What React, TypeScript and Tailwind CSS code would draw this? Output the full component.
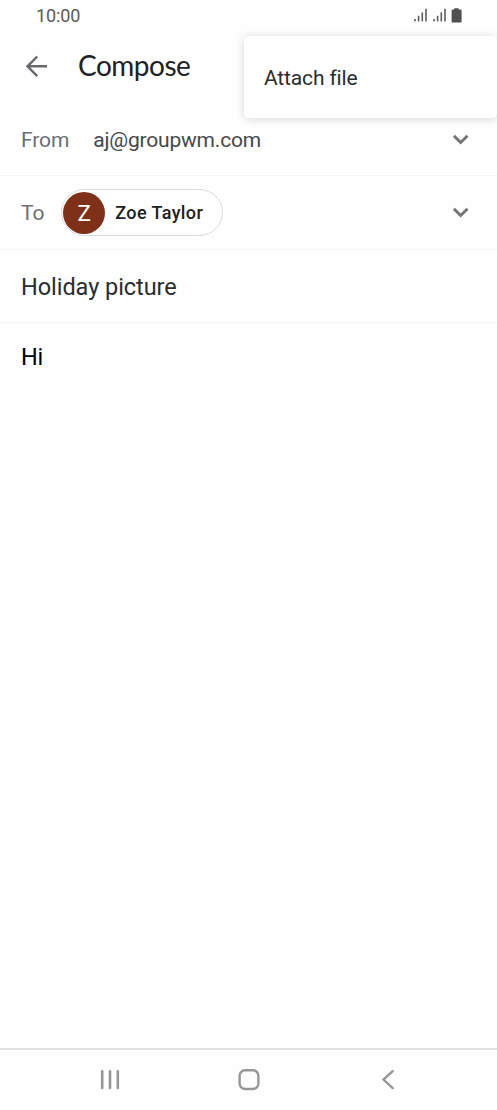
import type { ReactNode } from "react";

function SignalIcon() {
  return (
    <svg width="13" height="14" viewBox="0 0 13 14" fill="#5c5c5c">
      <rect x="0.2" y="11" width="1.6" height="2.4" />
      <rect x="3.8" y="7.8" width="1.6" height="5.6" />
      <rect x="7.5" y="4.4" width="1.6" height="9" />
      <rect x="11.2" y="0.8" width="1.6" height="12.6" />
    </svg>
  );
}

function BatteryIcon() {
  return (
    <svg width="11" height="15" viewBox="0 0 11 15" fill="#505050">
      <path d="M3.2 0.2h4.4v1.3h2a1 1 0 0 1 1 1v11a1 1 0 0 1-1 1H1.6a1 1 0 0 1-1-1v-11a1 1 0 0 1 1-1h1.6z" />
    </svg>
  );
}

function StatusBar() {
  return (
    <div className="flex h-8 items-center justify-between pr-[35px] pl-9 text-[#5a5a5a]">
      <span className="text-[18px] leading-8 tracking-[-0.1px]">10:00</span>
      <div className="-mt-0.5 flex items-center">
        <SignalIcon />
        <span className="w-1.5" />
        <SignalIcon />
        <span className="w-[5px]" />
        <BatteryIcon />
      </div>
    </div>
  );
}

function Header() {
  return (
    <header className="flex h-[71px] items-center pl-[26px]">
      <svg width="22" height="22" viewBox="0 0 22 22" fill="none" stroke="#68696c" strokeWidth="2.4" className="-mt-[3px]">
        <path d="M21 11.3H2M11.2 1.5L1.5 11.3L11.2 21.1" />
      </svg>
      <h1 className="-mt-[5px] ml-[30px] font-[Lato] text-[28px] leading-8 tracking-[-0.5px] text-[#202124]">
        Compose
      </h1>
    </header>
  );
}

function Chevron() {
  return (
    <svg width="16" height="11" viewBox="0 0 16 11" fill="none" stroke="#747474" strokeWidth="2.8" className="mr-7 ml-auto">
      <path d="M0.9 1.8L7.7 8.6L14.5 1.8" />
    </svg>
  );
}

function Row({ label, children }: { label: string; children: ReactNode }) {
  return (
    <>
      <span className="pt-[3px] text-[21px] tracking-[-0.1px] text-[#6b6e73]">{label}</span>
      {children}
      <Chevron />
    </>
  );
}

function OverflowMenu() {
  return (
    <div className="absolute top-9 right-0 flex h-[82px] w-[253.5px] items-center rounded-[5px] bg-white pt-[3px] pl-[20.5px] shadow-[0_1px_10px_rgba(0,0,0,0.16)]">
      <span className="text-[21px] tracking-[-0.15px] text-[#2b2c2e]">Attach file</span>
    </div>
  );
}

function NavBar() {
  return (
    <nav className="flex h-[62px] items-center border-t-2 border-[#e2e2e2] pl-[100px]">
      <svg width="20" height="20" viewBox="0 0 20 20" fill="none" stroke="#969696" strokeWidth="2.6" strokeLinecap="round">
        <path d="M2.2 1.3v16.6M10 1.3v16.6M17.8 1.3v16.6" />
      </svg>
      <svg width="22" height="22" viewBox="0 0 22 22" fill="none" stroke="#969696" strokeWidth="2.4" className="ml-[118px]">
        <rect x="1.6" y="1.2" width="18.8" height="18.8" rx="5.6" />
      </svg>
      <svg width="13" height="20" viewBox="0 0 13 20" fill="none" stroke="#969696" strokeWidth="2.4" strokeLinecap="round" className="ml-[122px]">
        <path d="M10.7 1.1L1.5 9.6l9.2 8.5" />
      </svg>
    </nav>
  );
}

export default function App() {
  return (
    <div className="relative flex h-[1110px] w-[497px] flex-col overflow-hidden bg-[#fefefe] font-[Roboto,sans-serif]">
      <StatusBar />
      <Header />
      <div className="flex h-[73px] items-center border-b border-[#f3f3f3] pl-[21px]">
        <Row label="From">
          <span className="ml-6 pt-[3px] text-[21px] tracking-[-0.2px] text-[#47484b]">aj@groupwm.com</span>
        </Row>
      </div>
      <div className="flex h-[74px] items-center border-b border-[#f3f3f3] pl-[21px]">
        <Row label="To">
          <div className="ml-[17px] flex h-[47px] w-[162px] items-center rounded-full border-[1.5px] border-[#dcdcdc] pl-px">
            <span className="flex size-[42px] items-center justify-center rounded-full bg-[#7f3018] pt-[3px] text-[22.5px] text-white">
              Z
            </span>
            <span className="ml-2.5 text-[18px] font-medium tracking-[0.4px] text-[#202124]">Zoe Taylor</span>
          </div>
        </Row>
      </div>
      <div className="flex h-[73px] items-center border-b border-[#f3f3f3] pt-[3px] pl-[21px] text-[23.5px] tracking-[-0.05px] text-[#2b2c2e]">
        Holiday picture
      </div>
      <div className="flex-1 pt-[18px] pl-[21px] text-[23.5px] leading-8 tracking-[-0.3px] text-black">Hi</div>
      <NavBar />
      <OverflowMenu />
    </div>
  );
}
